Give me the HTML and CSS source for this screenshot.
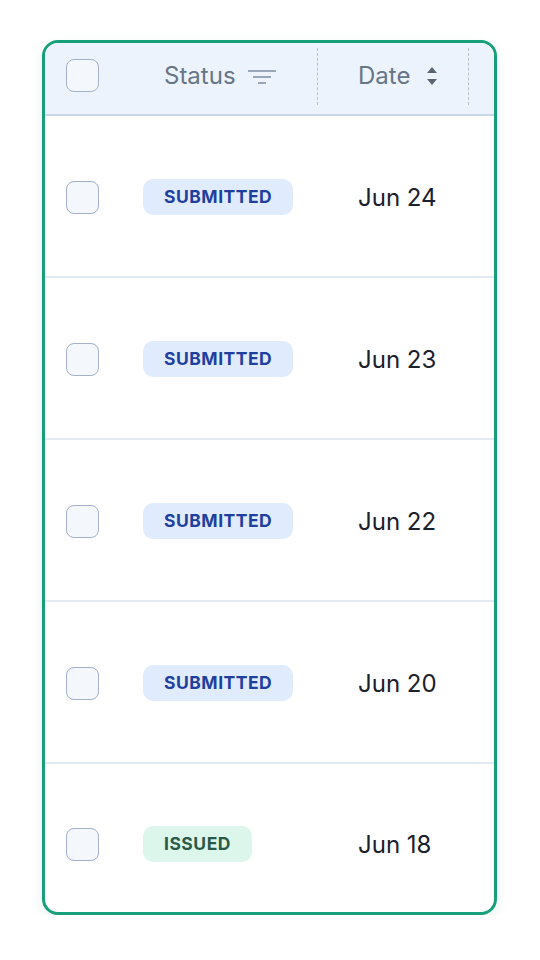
FILE: index.html
```html
<!DOCTYPE html>
<html lang="en">
<head>
    <meta charset="UTF-8">
    <meta name="viewport" content="width=device-width, initial-scale=1.0">
    <title>Table</title>
    <link rel="stylesheet" href="styles.css">
</head>
<body>
    <div class="card">
        <div class="row head">
            <div class="cell check"><span class="box"></span></div>
            <div class="cell status-h">
                Status
                <svg class="filter" width="30" height="16" viewBox="0 0 30 16">
                    <path d="M1 2h28M6 8h18M11 14h8" stroke="#9aa6b9" stroke-width="2"/>
                </svg>
                <span class="sep"></span>
            </div>
            <div class="cell date-h">
                Date
                <svg class="sort" width="12" height="20" viewBox="0 0 12 20">
                    <path d="M6 1l5 6H1z M6 19l5-6H1z" fill="#5a6576"/>
                </svg>
                <span class="sep"></span>
            </div>
        </div>

        <div class="row">
            <div class="cell check"><span class="box"></span></div>
            <div class="cell"><span class="badge submitted">SUBMITTED</span></div>
            <div class="cell date">Jun 24</div>
        </div>
        <div class="row">
            <div class="cell check"><span class="box"></span></div>
            <div class="cell"><span class="badge submitted">SUBMITTED</span></div>
            <div class="cell date">Jun 23</div>
        </div>
        <div class="row">
            <div class="cell check"><span class="box"></span></div>
            <div class="cell"><span class="badge submitted">SUBMITTED</span></div>
            <div class="cell date">Jun 22</div>
        </div>
        <div class="row">
            <div class="cell check"><span class="box"></span></div>
            <div class="cell"><span class="badge submitted">SUBMITTED</span></div>
            <div class="cell date">Jun 20</div>
        </div>
        <div class="row last">
            <div class="cell check"><span class="box"></span></div>
            <div class="cell"><span class="badge issued">ISSUED</span></div>
            <div class="cell date">Jun 18</div>
        </div>
    </div>
</body>
</html>
```

FILE: styles.css
```css
body {
    margin: 0;
    background: #fff;
    font-family: Inter, "Noto Sans", sans-serif;
}
.card {
    width: 449px;
    margin: 40px 0 0 42px;
    border: 3px solid #179f7a;
    border-radius: 16px;
    overflow: hidden;
    background: #fff;
    box-shadow: 0 4px 12px rgba(23, 159, 122, 0.12);
}
.row {
    display: grid;
    grid-template-columns: 98px 175px 1fr;
    height: 158px;
    padding-top: 2px;
    border-bottom: 2px solid #e3eaf3;
}
.row.last {
    height: 136px;
    padding-top: 12px;
    border-bottom: none;
}
.row.head {
    height: 65px;
    padding: 0 0 6px;
    background: #edf3fc;
    border-bottom: 2px solid #c9d7ea;
}
.cell {
    display: flex;
    align-items: center;
    position: relative;
}
.check {
    padding-left: 21px;
}
.box {
    width: 31px;
    height: 31px;
    border: 1px solid #a3b1cc;
    border-radius: 8px;
    background: #f4f7fb;
}
.status-h, .date-h {
    font-size: 24px;
    color: #677587;
}
.status-h {
    padding-left: 21px;
}
.filter {
    margin-left: 11px;
    margin-top: 2px;
}
.date-h {
    padding-left: 40px;
}
.sort {
    margin-left: 16px;
}
.sep {
    position: absolute;
    right: 0;
    top: 5px;
    bottom: 3px;
    border-left: 1px dashed #b5c0d0;
}
.date-h .sep {
    right: 25px;
}
.badge {
    display: inline-block;
    height: 36px;
    line-height: 36px;
    padding: 0 21px;
    border-radius: 10px;
    font-size: 17.5px;
    font-weight: 700;
    letter-spacing: 0.5px;
}
.submitted {
    background: #e0ecfd;
    color: #1f3f9f;
}
.issued {
    background: #dcf6ec;
    color: #2a5a47;
}
.date {
    padding-left: 40px;
    font-size: 24px;
    color: #1a202c;
}
```
